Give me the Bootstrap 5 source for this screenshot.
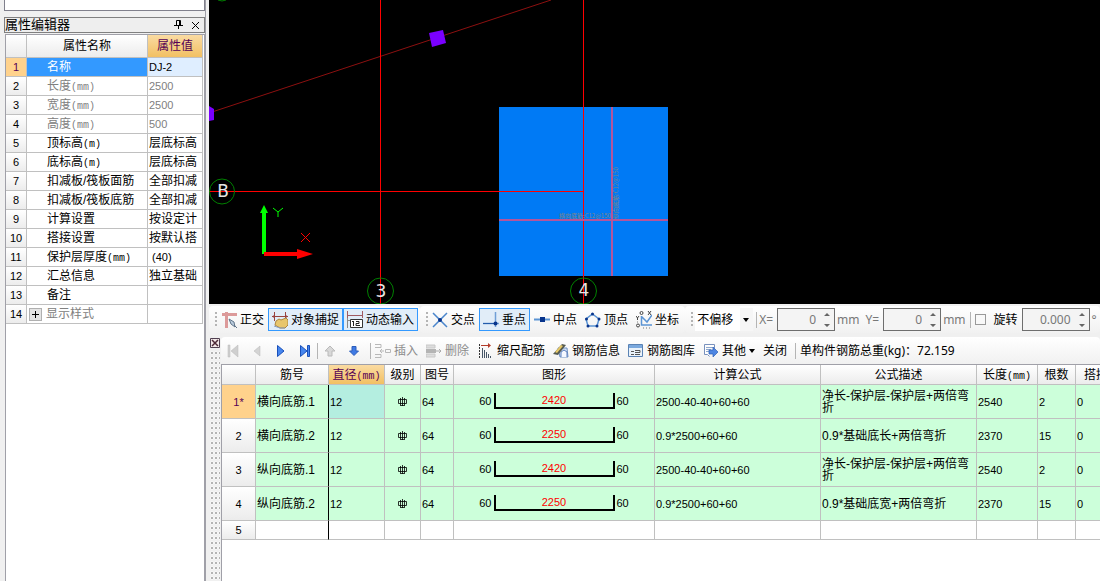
<!DOCTYPE html>
<html lang="zh-CN">
<head>
<meta charset="utf-8">
<meta name="viewport" content="width=device-width, initial-scale=1">
<title>属性编辑器</title>
<link rel="stylesheet" href="https://cdn.jsdelivr.net/npm/bootstrap@5.3.0/dist/css/bootstrap.min.css">
<style>
body{font:12px/16px "Liberation Sans","Noto Sans CJK SC",sans-serif;color:#000;background:#f0f0f0}
svg{flex:none;display:block}
.side{width:205px;padding-left:4px}
.prev-box{height:11px;border:1px solid #80808c;border-top:0;background:#fff;margin-bottom:6px}
.dock-title{height:16px;border:1px solid #808080;background:#eee;font-size:13px;line-height:14px;margin-bottom:1px}
.dock-title button,.close-x{border:0;background:none;padding:0;display:block}
.prop-box{border:1px solid #a0a0a8;border-bottom:0;margin-left:1px}
.grid{table-layout:fixed;border-collapse:separate;border-spacing:0;width:100%}
.grid th,.grid td{border:solid #c0c0c0;border-width:0 1px 1px 0;padding:0 1px;white-space:nowrap;overflow:hidden;font-weight:400;text-align:left;vertical-align:middle}
.grid thead th,.grid tbody th{background:linear-gradient(#fff,#ececec);text-align:center}
.grid thead th.picked{background:linear-gradient(#fadba2,#f2c063);color:#550055}
.grid tbody th.picked{background:#ffd28c;color:#550055}
.prop-grid{width:197px}
.prop-grid th,.prop-grid td{height:19px;line-height:18px}
.prop-grid thead th{height:23px}
.prop-grid td:nth-child(2){padding-left:20px}
.dim{color:#808080}
.num{font-size:11px}
.unit{font-family:"Liberation Mono",monospace;font-size:10px;line-height:0}
.expander{width:13px;height:13px;margin-left:-18px;border:1px solid #b0b0b0;background:#e4e4e4;padding:0}
.work{padding-left:3px;border-left:1px solid #a0a0a8}
.cad{background:#000;height:304px;width:100%}
.cad .axis{stroke:#f00;fill:none}
.cad .bubble{stroke:#008000;fill:none}
.tool-row{height:29px;padding-top:2px}
.strip{height:27px;background:linear-gradient(#fff,#f1f1f1);border-radius:4px;font-family:"Noto Sans","Noto Sans CJK SC",sans-serif}
.tool-row .strip{padding-right:2px}
.tool{border:1px solid transparent;background:none;height:23px;padding:0 3px;gap:3px;display:flex;align-items:center;white-space:nowrap;color:#000;border-radius:0;flex:none;line-height:20px}
.tool.active{border-color:#3399ff;background:#e1edf8}
.tool:disabled{color:#8c8c8c}
.grip{width:2px;height:15px;margin-left:6px;background:repeating-linear-gradient(#b4b4b4 0 2px,transparent 2px 4px);flex:none}
.rule{width:1px;height:16px;background:#b4b4b4;flex:none}
.offset{border:0;appearance:none;width:58px;height:23px;margin:0 3px 0 2px;padding:0 0 0 2px;color:#000;border-radius:0;flex:none;background:#fff url("data:image/svg+xml,%3Csvg xmlns='http://www.w3.org/2000/svg' width='13' height='23'%3E%3Cpath fill='%23f6f6f6' d='M0 0h13v23H0z'/%3E%3Cpath d='M3 10h6l-3 4z'/%3E%3C/svg%3E") right no-repeat}
.spin{position:relative;color:#787878;font-size:12px;flex:none}
.spin input{width:58px;height:23px;border:1px solid #6e6e6e;background:#f4f4f4;color:#787878;text-align:right;padding:0 18px 0 2px;display:block}
.spin input.wide{width:68px}
.spin svg{position:absolute;right:4px;top:4px}
.tick{appearance:none;width:11px;height:11px;border:1px solid #999;background:#f8f8f8;margin:0 8px 0 4px;flex:none}
.muted{color:#787878;padding:0 4px 0 2px}
.handle{width:12px;flex:none;padding:1px 0 0 1px}
.dots{width:10px;margin-top:2px;background:radial-gradient(circle at 2px 2px,#b4b4b4 1px,#fff 1px,transparent 2px) 0 0/4px 5px}
.sheet{background:#fff;border:solid #a0a0a8;border-width:1px 0 0 1px}
.bar-grid{width:914px}
.bar-grid th,.bar-grid td{height:34px;line-height:12px}
.bar-grid thead th{height:20px;line-height:18px}
.bar-grid tbody tr:last-child>*{height:19px}
.filled td{background:#ccffda}
.filled td.cur{background:#b4eee0}
.bar-grid tr>*:nth-child(2){border-right-color:#000}
.bar-grid thead tr>*:nth-child(2){border-right-color:#c0c0c0}
.bar-grid td.wrap{white-space:normal}
.shape{display:flex;justify-content:center;align-items:center;gap:2px;padding-bottom:2px}
.hook{width:121px;height:16px;border:solid #000;border-width:0 2px 2px;color:#f00;line-height:14px;text-align:center}
</style>
<script src="https://cdn.jsdelivr.net/npm/bootstrap@5.3.0/dist/js/bootstrap.bundle.min.js"></script>
</head>
<body>
<div class="d-flex vh-100 overflow-hidden">
<aside class="side d-flex flex-column flex-shrink-0">
  <div class="prev-box"></div>
  <div class="dock-title d-flex align-items-center">
    <span class="me-auto">属性编辑器</span>
    <button aria-label="固定" class="me-2"><svg width="9" height="10"><path d="M2.500 5V.5h4V5M5.500.5V5M0 5.500h9M4.500 5v4" fill="none" stroke="#000"/></svg></button>
    <button aria-label="关闭面板" class="me-1"><svg width="9" height="9"><path d="M1 1l7 7M8 1L1 8" stroke="#000"/></svg></button>
  </div>
  <div class="prop-box bg-white flex-grow-1 overflow-hidden">
    <table class="grid prop-grid">
      <colgroup><col style="width:21px"><col style="width:121px"><col style="width:55px"></colgroup>
      <thead><tr><th></th><th>属性名称</th><th class="picked">属性值</th></tr></thead>
      <tbody>
      <tr><th class="picked num">1</th><td style="background:#39f;color:#fff">名称</td><td class="num" style="background:#dfeeff">DJ-2</td></tr>
      <tr class="dim"><th class="num text-black">2</th><td>长度<span class="unit">(mm)</span></td><td class="num">2500</td></tr>
      <tr class="dim"><th class="num text-black">3</th><td>宽度<span class="unit">(mm)</span></td><td class="num">2500</td></tr>
      <tr class="dim"><th class="num text-black">4</th><td>高度<span class="unit">(mm)</span></td><td class="num">500</td></tr>
      <tr><th class="num">5</th><td>顶标高<span class="unit">(m)</span></td><td>层底标高</td></tr>
      <tr><th class="num">6</th><td>底标高<span class="unit">(m)</span></td><td>层底标高</td></tr>
      <tr><th class="num">7</th><td>扣减板/筏板面筋</td><td>全部扣减</td></tr>
      <tr><th class="num">8</th><td>扣减板/筏板底筋</td><td>全部扣减</td></tr>
      <tr><th class="num">9</th><td>计算设置</td><td>按设定计</td></tr>
      <tr><th class="num">10</th><td>搭接设置</td><td>按默认搭</td></tr>
      <tr><th class="num">11</th><td>保护层厚度<span class="unit">(mm)</span></td><td class="num ps-1">(40)</td></tr>
      <tr><th class="num">12</th><td>汇总信息</td><td>独立基础</td></tr>
      <tr><th class="num">13</th><td>备注</td><td></td></tr>
      <tr><th class="num">14</th><td><div class="d-flex align-items-center dim"><button class="expander me-1" aria-label="展开"><svg width="11" height="11"><path d="M2 5.500h7M5.500 2v7" stroke="#000"/></svg></button><span>显示样式</span></div></td><td></td></tr>
      </tbody>
    </table>
  </div>
</aside>

<main class="work d-flex flex-column flex-grow-1 overflow-hidden">
  <svg class="cad" role="img" aria-label="绘图区" font-family="Liberation Sans, sans-serif">
    <path d="M0 113L342 0" stroke="#8c1010"/>
    <path d="M220 33l14-3 3 13-14 4zM0 106l5 3v11l-5 1z" fill="#7a00ff"/>
    <rect x="290" y="107" width="169" height="169" fill="#007af5"/>
    <path class="axis" d="M0 191.500h374M171.500 0v304M374.500 0v304" shape-rendering="crispEdges"/>
    <path d="M290 219.500h169M403 107v169" stroke="#b4559b" stroke-width="2" shape-rendering="crispEdges"/>
    <g fill="#7f8488" font-size="6" font-family="Noto Sans CJK SC, sans-serif"><text x="350" y="218">横向底筋:C12@150</text><text transform="translate(409 219) rotate(-90)">纵向底筋:C12@150</text></g>
    <g class="bubble"><circle cx="13" cy="191.500" r="12.500"/><circle cx="171.500" cy="291" r="13"/><circle cx="374.500" cy="291" r="13"/><path d="M9 0q4 2 8 0"/></g>
    <g fill="#e6e6e6" font-size="17" font-family="DejaVu Sans, sans-serif" text-anchor="middle"><text x="14" y="197">B</text><text x="172" y="297">3</text><text x="375" y="296">4</text></g>
    <path d="M53 254v-41h-2l4-8 4 8h-2v41z" fill="#0f0"/>
    <path d="M55 252h33v-3l16 5-16 5v-3H55z" fill="#f00"/>
    <path d="M64 208l5 4 5-4M69 212v5" stroke="#0f0" fill="none"/>
    <path d="M92 233l9 9M101 233l-9 9" stroke="#f00"/>
  </svg>

  <div class="tool-row d-flex flex-shrink-0 mb-1">
    <div class="strip d-flex align-items-center flex-shrink-0" role="toolbar">
      <i class="grip"></i>
      <button class="tool"><svg width="16" height="18"><path d="M1 3.500h15M5.500 1v16" stroke="#dc9a9a" stroke-width="3"/><path d="M8 8l5 3 1 5-4-3z" fill="#b9cbdc" stroke="#61758a"/><path d="M13 14l3 3" stroke="#61758a"/></svg>正交</button>
      <button class="tool active"><svg width="16" height="18"><path d="M2.500 1v9M13.500 1v6M0 5.500h16" stroke="#98433f" /><path d="M0 5.500l3-2v4zM16 5.500l-3-2v4z" fill="#98433f"/><path d="M4 10l3-2 2 1 5-2 2 2v5l-3 3H8l-5-3z" fill="#e8c66c" stroke="#ad8740"/><path d="M2 15l6 2h5" stroke="#8b9fbd" fill="none"/></svg>对象捕捉</button>
      <button class="tool active"><svg width="16" height="18"><path d="M.5 0v7M15.500 0v7M1 4.500h14" stroke="#a05b62"/><path d="M.5 7v10M1 9.500h3" stroke="#888"/><path d="M3.500 8.500h12v8h-12z" fill="#fff" stroke="#333"/><path d="M6.500 10v5M5 10.500h1M9 10.500h3v2h-3v2h4" stroke="#222" fill="none"/></svg>动态输入</button>
    </div>
    <div class="strip d-flex align-items-center flex-shrink-0" role="toolbar">
      <i class="grip"></i>
      <button class="tool"><svg width="16" height="16"><path d="M1 1l14 14M15 1L1 15" stroke="#4b86cc" stroke-width="1.500"/><circle cx="8" cy="8" r="2" fill="#08348c"/></svg>交点</button>
      <button class="tool active"><svg width="16" height="16"><path d="M0 11.500h16M12.500 0v15" stroke="#6f9fd6" stroke-width="1.500"/><path d="M0 11.500h12" stroke="#245cab"/><circle cx="12.500" cy="11.500" r="2" fill="#08348c"/></svg>垂点</button>
      <button class="tool"><svg width="16" height="16"><path d="M0 7.500h16" stroke="#5b94d4" stroke-width="2"/><path d="M6 5h5v5H6z" fill="#08348c"/></svg>中点</button>
      <button class="tool"><svg width="16" height="16"><path d="M7.500 2L14 7l-2 7H3L1 7z" fill="none" stroke="#5b94d4" stroke-width="1.500"/><g fill="#08348c"><circle cx="7.500" cy="2" r="1.500"/><circle cx="14" cy="7" r="1.500"/><circle cx="12" cy="14" r="1.500"/><circle cx="3" cy="14" r="1.500"/><circle cx="1.500" cy="7" r="1.500"/></g></svg>顶点</button>
      <button class="tool"><svg width="16" height="18"><path d="M5.500 5v9H16M6 6l5 5 5-7" fill="none" stroke="#5b94d4" stroke-width="1.500"/><path d="M0 5l1.500 2L3 5M1.500 7v2M12 0l3 4M15 0l-3 4" stroke="#444" fill="none"/><circle cx="5.500" cy="2" r="1.500" fill="none" stroke="#444"/><circle cx="2" cy="14.500" r="1.500" fill="none" stroke="#444"/><path d="M1 11h3M7 17h8" stroke="#777" stroke-dasharray="1 2"/></svg>坐标</button>
    </div>
    <div class="strip d-flex align-items-center flex-grow-1" role="toolbar">
      <i class="grip"></i>
      <select class="offset" aria-label="偏移方式"><option>不偏移</option></select>
      <i class="rule"></i>
      <label for="dx" class="muted">X=</label>
      <span class="spin"><input id="dx" value="0"><svg width="7" height="15"><path d="M0 4h6L3 1zM0 12h6l-3 3z" fill="#666"/></svg></span>
      <span class="muted">mm</span>
      <label for="dy" class="muted">Y=</label>
      <span class="spin"><input id="dy" value="0"><svg width="7" height="15"><path d="M0 4h6L3 1zM0 12h6l-3 3z" fill="#666"/></svg></span>
      <span class="muted">mm</span>
      <i class="rule"></i>
      <input type="checkbox" class="tick" id="rot"><label for="rot" class="text-nowrap pe-1">旋转</label>
      <span class="spin"><input class="wide" aria-label="旋转角度" value="0.000"><svg width="7" height="15"><path d="M0 4h6L3 1zM0 12h6l-3 3z" fill="#666"/></svg></span>
      <span class="muted pe-0">°</span>
    </div>
  </div>

  <section class="d-flex flex-grow-1 overflow-hidden">
    <div class="handle d-flex flex-column">
      <button class="close-x" aria-label="关闭钢筋面板"><svg width="11" height="11"><path d="M.5.5h9v9h-9z" fill="#f3e8e8" stroke="#504050"/><path d="M2 2l6 6M8 2L2 8" stroke="#4d2936" stroke-width="1.500"/></svg></button>
      <div class="dots flex-grow-1"></div>
    </div>
    <div class="d-flex flex-column flex-grow-1 overflow-hidden">
      <div class="strip d-flex align-items-center flex-shrink-0" role="toolbar">
        <button class="tool" disabled aria-label="首条"><svg width="16" height="16"><path d="M3 2h2v12H3zM13 2v12L6 8z" fill="#cfcfcf" stroke="#b8b8b8" stroke-width=".5"/></svg></button>
        <button class="tool" disabled aria-label="上一条"><svg width="16" height="16"><path d="M11 3v10L5 8z" fill="#d4d4d4" stroke="#b8b8b8" stroke-width=".5"/></svg></button>
        <button class="tool" aria-label="下一条"><svg width="16" height="16"><path d="M4.500 2.500v11L11 8z" fill="#4686ee" stroke="#1a50ba"/></svg></button>
        <button class="tool" aria-label="末条"><svg width="16" height="16"><path d="M3.500 2.500v11L10 8zM10.500 2.500h2v11h-2z" fill="#4686ee" stroke="#1a50ba"/></svg></button>
        <i class="rule"></i>
        <button class="tool" disabled aria-label="上移"><svg width="16" height="16"><path d="M8 3l5 5h-3v5H6V8H3z" fill="#d8d8d8" stroke="#bababa"/></svg></button>
        <button class="tool" aria-label="下移"><svg width="16" height="16"><path d="M8 12.500L3.500 8H6V3.500h4V8h2.500z" fill="#3f7ae4" stroke="#2c5dbb"/></svg></button>
        <i class="rule ms-1"></i>
        <button class="tool" disabled><svg width="16" height="16"><path d="M0 1.500h6v3H0M0 11.500h6v3H0M10.500 6.500h5v3h-5zM5 8h4M7 6L5 8l2 2" fill="none" stroke="#b8b8b8"/></svg>插入</button>
        <button class="tool" disabled><svg width="16" height="16"><path d="M0 2h9v3H0zM0 11h9v3H0z" fill="#ddd" stroke="#c8c8c8"/><path d="M0 6h10v4H0z" fill="#b4b4b4"/><path d="M10 8h5M13 6l2 2-2 2" stroke="#aaa" fill="none"/></svg>删除</button>
        <i class="ms-1"></i>
        <button class="tool ps-0"><svg width="16" height="16"><path d="M1.500 1v14" stroke="#333" stroke-dasharray="2 1"/><path d="M3 2.500h9" stroke="#b33c2b"/><path d="M10 0l3 2.500L10 5z" fill="#b33c2b"/><path d="M4.500 5v10M6.500 7v8M8.500 9v6M10.500 11v4M12.500 13v2" stroke="#475667"/></svg>缩尺配筋</button>
        <button class="tool"><svg width="16" height="16"><path d="M5 5h9l1 9H7z" fill="#d4e2f5" stroke="#6f91c4"/><path d="M0 11L9 1l4 1-8 10z" fill="#555a50"/><path d="M2 9l6-7 2 1-6 7z" fill="#e6c867"/><path d="M8 14V9l3-2 3 2v5" fill="#f5f8ff" stroke="#5b7fbd"/></svg>钢筋信息</button>
        <button class="tool"><svg width="16" height="16"><path d="M.5 1.500h14v12H.5z" fill="#eaf2fa" stroke="#5b83b4"/><path d="M1 2h13v3H1z" fill="#7ba9de"/><path d="M3 8.500h3M3 11.500h3M7 7.500h5v2H7M7 11.500h5" fill="none" stroke="#555"/></svg>钢筋图库</button>
        <button class="tool"><svg width="16" height="16"><path d="M1.500 1.500h10v4M1.500 1.500v10h3l2 2" fill="#fff" stroke="#7891bd"/><path d="M3 4.500h7M3 6.500h5M3 8.500h4" stroke="#8fa8cd"/><path d="M6 7h4V4l5 5-5 5v-3H6z" fill="#4e86e2" stroke="#2f60b5" stroke-width=".7"/></svg>其他<svg width="6" height="4"><path d="M0 0h6L3 4z"/></svg></button>
        <button class="tool">关闭</button>
        <i class="rule mx-1"></i>
        <span class="text-nowrap">单构件钢筋总重(kg)：72.159</span>
      </div>
      <div class="sheet flex-grow-1 overflow-hidden">
        <table class="grid bar-grid">
          <colgroup><col style="width:34px"><col style="width:73px"><col style="width:56px"><col style="width:36px"><col style="width:33px"><col style="width:201px"><col style="width:166px"><col style="width:156px"><col style="width:61px"><col style="width:38px"><col style="width:60px"></colgroup>
          <thead><tr><th></th><th>筋号</th><th class="picked">直径<span class="unit">(mm)</span></th><th>级别</th><th>图号</th><th>图形</th><th>计算公式</th><th>公式描述</th><th>长度<span class="unit">(mm)</span></th><th>根数</th><th class="text-start ps-2">搭接</th></tr></thead>
          <tbody>
          <tr class="filled"><th class="picked num">1*</th><td>横向底筋.1</td><td class="num cur">12</td><td><svg class="mx-auto" width="9" height="9"><path d="M4.500 0v9M.5 2.500h8v4h-8zM2 8.500h5M2.500 1v7M6.500 1v7" fill="none" stroke="#000" stroke-width=".8"/></svg></td><td class="num">64</td><td class="num"><div class="shape"><span>60</span><span class="hook">2420</span><span>60</span></div></td><td class="num">2500-40-40+60+60</td><td class="wrap">净长-保护层-保护层+两倍弯折</td><td class="num">2540</td><td class="num">2</td><td class="num">0</td></tr>
          <tr class="filled"><th class="num">2</th><td>横向底筋.2</td><td class="num">12</td><td><svg class="mx-auto" width="9" height="9"><path d="M4.500 0v9M.5 2.500h8v4h-8zM2 8.500h5M2.500 1v7M6.500 1v7" fill="none" stroke="#000" stroke-width=".8"/></svg></td><td class="num">64</td><td class="num"><div class="shape"><span>60</span><span class="hook">2250</span><span>60</span></div></td><td class="num">0.9*2500+60+60</td><td class="wrap">0.9*基础底长+两倍弯折</td><td class="num">2370</td><td class="num">15</td><td class="num">0</td></tr>
          <tr class="filled"><th class="num">3</th><td>纵向底筋.1</td><td class="num">12</td><td><svg class="mx-auto" width="9" height="9"><path d="M4.500 0v9M.5 2.500h8v4h-8zM2 8.500h5M2.500 1v7M6.500 1v7" fill="none" stroke="#000" stroke-width=".8"/></svg></td><td class="num">64</td><td class="num"><div class="shape"><span>60</span><span class="hook">2420</span><span>60</span></div></td><td class="num">2500-40-40+60+60</td><td class="wrap">净长-保护层-保护层+两倍弯折</td><td class="num">2540</td><td class="num">2</td><td class="num">0</td></tr>
          <tr class="filled"><th class="num">4</th><td>纵向底筋.2</td><td class="num">12</td><td><svg class="mx-auto" width="9" height="9"><path d="M4.500 0v9M.5 2.500h8v4h-8zM2 8.500h5M2.500 1v7M6.500 1v7" fill="none" stroke="#000" stroke-width=".8"/></svg></td><td class="num">64</td><td class="num"><div class="shape"><span>60</span><span class="hook">2250</span><span>60</span></div></td><td class="num">0.9*2500+60+60</td><td class="wrap">0.9*基础底宽+两倍弯折</td><td class="num">2370</td><td class="num">15</td><td class="num">0</td></tr>
          <tr><th class="num">5</th><td></td><td></td><td></td><td></td><td></td><td></td><td></td><td></td><td></td><td></td></tr>
          </tbody>
        </table>
      </div>
    </div>
  </section>
</main>
</div>
</body>
</html>
